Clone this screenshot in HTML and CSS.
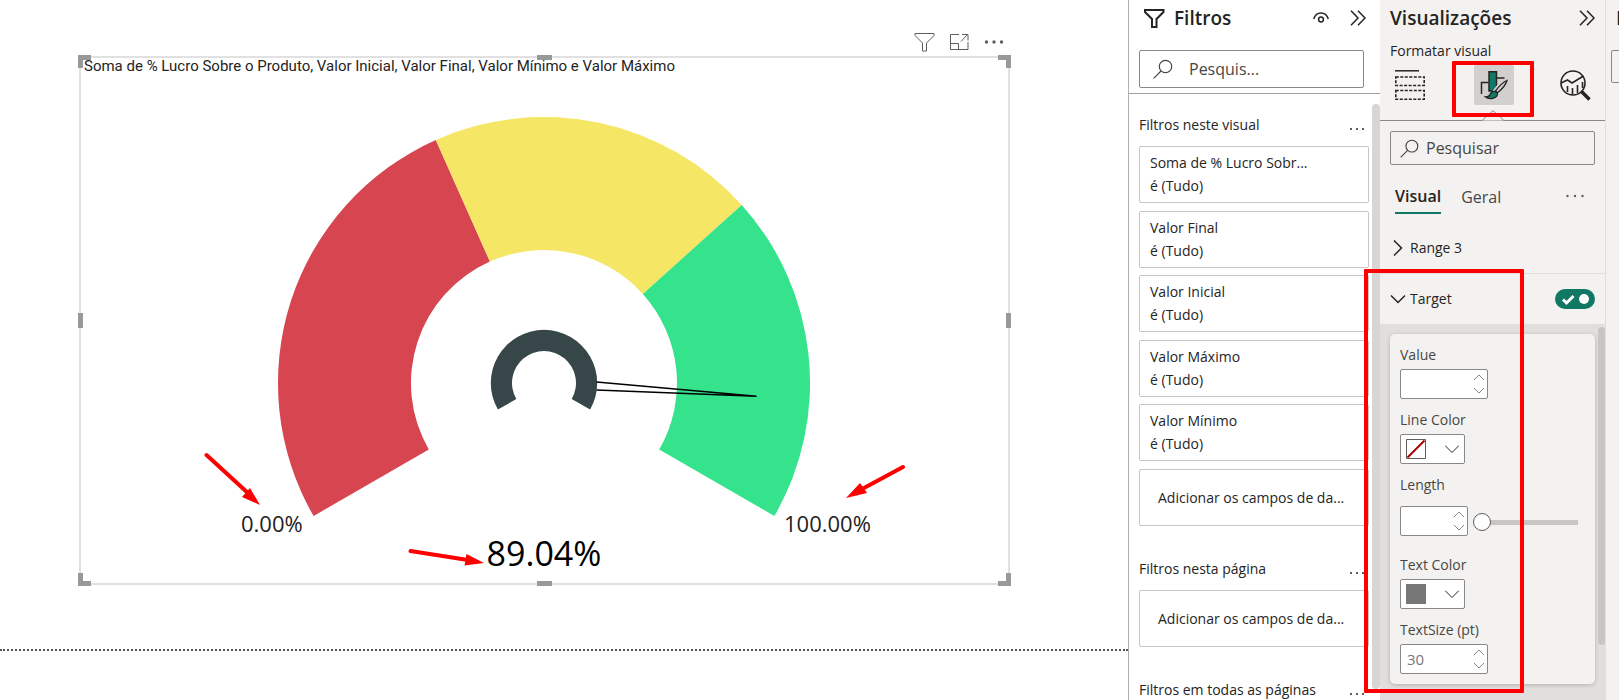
FILE: index.html
```html
<!DOCTYPE html>
<html lang="pt-BR">
<head>
<meta charset="utf-8">
<title>Medidor</title>
<link rel="stylesheet" href="styles.css">
</head>
<body>
<main class="canvas">
  <section class="visual">
    <div class="visual-tools">
      <button class="icon-btn" aria-label="Filtros"><svg width="21" height="20" viewBox="0 0 21 20"><path d="M1 1.5h19v2l-7.500 7.500v8h-4v-8l-7.500-7.500z"/></svg></button>
      <button class="icon-btn" aria-label="Foco"><svg width="19" height="16" viewBox="0 0 19 16"><path d="M9 .5H.500v15h17.500V8M.500 9.500h8v6M11 7.500l6.500-7M12 .5h6v6"/></svg></button>
      <button class="icon-btn" aria-label="Mais"><svg class="dots" width="20" height="6" viewBox="0 0 20 6"><circle cx="2.500" cy="3" r="1.700"/><circle cx="10" cy="3" r="1.700"/><circle cx="17.500" cy="3" r="1.700"/></svg></button>
    </div>
    <div class="frame">
      <h2 class="visual-title">Soma de % Lucro Sobre o Produto, Valor Inicial, Valor Final, Valor Mínimo e Valor Máximo</h2>
      <svg class="gauge" viewBox="81 76 927 507">
        <g transform="translate(544 383)">
          <path fill="#d64550" d="M-230.400 133A266 266 0 0 1-108.200-243L-54.100-121.500A133 133 0 0 0-115.200 66.500Z"/>
          <path fill="#f5e665" d="M-108.200-243A266 266 0 0 1 197.700-178L98.800-89A133 133 0 0 0-54.100-121.500Z"/>
          <path fill="#34e38b" d="M197.700-178A266 266 0 0 1 230.400 133L115.200 66.500A133 133 0 0 0 98.800-89Z"/>
          <path fill="#374649" d="M-46.100 26.600A53.200 53.200 0 1 1 46.100 26.600L27.700 16A32 32 0 1 0-27.700 16Z"/>
          <path fill="none" stroke="#000" stroke-width="1.500" d="M52.500-1L212.500 13.300L52.500 7"/>
        </g>
        <text class="limit" x="241" y="532">0.00%</text>
        <text class="limit" x="784" y="532">100.00%</text>
        <text class="reading" x="544" y="566" text-anchor="middle">89.04%</text>
        <g class="arrows">
          <path d="M206.500 455L249 494M410.500 551L468 560M903 467L863 488.500"/>
          <path class="head" d="M260 505L242 497L250 488ZM484 563L464.500 565.500L466.500 554ZM846 498L860 483L867 493Z"/>
        </g>
      </svg>
      <i class="corner tl"></i><i class="corner tr"></i><i class="corner bl"></i><i class="corner br"></i>
      <i class="grip top"></i><i class="grip bottom"></i><i class="grip left"></i><i class="grip right"></i>
    </div>
  </section>
  <hr class="page-edge">
</main>

<aside class="filters">
  <header class="filters-head">
    <div class="title-row">
      <svg width="21" height="19" viewBox="0 0 21 19"><path d="M1 1h18.500v2L12.500 10v8h-4.500v-8L1 3z"/></svg>
      <h1 class="pane-title">Filtros</h1>
      <button class="icon-btn eye" aria-label="Exibir"><svg width="16" height="12" viewBox="0 0 16 12"><path d="M.700 7C2 3 5 1 8 1s6 2 7.300 6"/><circle cx="8" cy="7.500" r="2.400"/></svg></button>
      <button class="icon-btn" aria-label="Recolher"><svg width="16" height="16" viewBox="0 0 16 16"><path d="M1 .7L8 8l-7 7.300M8 .7L15 8l-7 7.300"/></svg></button>
    </div>
    <div class="search wide">
      <svg width="20" height="20" viewBox="0 0 20 20"><circle cx="12.500" cy="7.500" r="6.200"/><path d="M8 12l-7.300 7.300"/></svg>
      <input type="text" placeholder="Pesquis..." aria-label="Pesquisar filtros">
    </div>
  </header>
  <div class="filters-body">
    <section class="group">
      <div class="group-head"><h3>Filtros neste visual</h3><button class="icon-btn" aria-label="Mais"><svg class="dots" width="14" height="3" viewBox="0 0 14 3"><path d="M0 1h2v2H0zM6 1h2v2H6zM12 1h2v2h-2z"/></svg></button></div>
      <div class="cards five">
        <div class="card"><span>Soma de % Lucro Sobr...</span><span>é (Tudo)</span></div>
        <div class="card"><span>Valor Final</span><span>é (Tudo)</span></div>
        <div class="card"><span>Valor Inicial</span><span>é (Tudo)</span></div>
        <div class="card"><span>Valor Máximo</span><span>é (Tudo)</span></div>
        <div class="card"><span>Valor Mínimo</span><span>é (Tudo)</span></div>
        <div class="card drop">Adicionar os campos de da...</div>
      </div>
    </section>
    <section class="group">
      <div class="group-head"><h3>Filtros nesta página</h3><button class="icon-btn" aria-label="Mais"><svg class="dots" width="14" height="3" viewBox="0 0 14 3"><path d="M0 1h2v2H0zM6 1h2v2H6zM12 1h2v2h-2z"/></svg></button></div>
      <div class="cards"><div class="card drop">Adicionar os campos de da...</div></div>
    </section>
    <section class="group">
      <div class="group-head"><h3>Filtros em todas as páginas</h3><button class="icon-btn" aria-label="Mais"><svg class="dots" width="14" height="3" viewBox="0 0 14 3"><path d="M0 1h2v2H0zM6 1h2v2H6zM12 1h2v2h-2z"/></svg></button></div>
    </section>
  </div>
  <i class="scrollbar"></i>
</aside>

<aside class="format">
  <header class="format-head">
    <div class="title-row">
      <h1 class="pane-title">Visualizações</h1>
      <button class="icon-btn" aria-label="Recolher"><svg width="16" height="16" viewBox="0 0 16 16"><path d="M1 .7L8 8l-7 7.300M8 .7L15 8l-7 7.300"/></svg></button>
    </div>
    <h2 class="subtitle">Formatar visual</h2>
    <div class="modes">
      <button class="mode" aria-label="Campos"><svg width="30" height="30" viewBox="0 0 30 30"><path stroke-width="1.500" d="M0 .8h24"/><path stroke-width="1.600" stroke-dasharray="3 1.500" d="M.800 7h28.400v8.500H.800zM.800 20.500h28.400v8.700H.800z"/></svg></button>
      <button class="mode active" aria-label="Formatar"><svg width="28" height="30" viewBox="0 0 28 30"><path stroke-width="1.500" d="M1.500 24V12.500h7M16.500 8h8"/><path fill="#117865" stroke-width="1.500" d="M9 1.700h7.500V21H9z"/><path fill="#d2d0ce" stroke="#d2d0ce" stroke-width="4" d="M27 10.500c-5 2-10 7-13 12l3 2c4-3 9-9 10-14z"/><path fill="#d2d0ce" stroke-width="1.300" d="M27 10.500c-4.500 2-8.500 6.500-11.500 10.500l2 1.700c3.800-3 8.300-7.700 9.500-12.200z"/><path fill="#117865" stroke-width="1.300" d="M15.500 21.500c-3.500-.5-5 1.500-5.500 3-.8 1.800-2.500 2.500-4.500 2.500 3.500 2.700 12.500 2 12-4z"/></svg></button>
      <button class="mode" aria-label="Análise"><svg width="31" height="31" viewBox="0 0 31 31"><circle cx="13" cy="13" r="12" stroke-width="1.600"/><path stroke-width="1.600" d="M1 13l6.500-3L12 13l11.500-7M7.500 16v6M12.500 18v6.500M17.500 15v8"/><path stroke-width="1.600" d="M22.500 12v6"/><path stroke-width="3.500" d="M21.500 21.500l8 8"/></svg></button>
    </div>
    <svg class="notch" width="22" height="11" viewBox="0 0 22 11"><path d="M0 10.500L11 .7L22 10.500"/></svg>
  </header>
  <div class="search">
    <svg width="19" height="19" viewBox="0 0 20 20"><circle cx="12.500" cy="7.500" r="6.200"/><path d="M8 12l-7.300 7.300"/></svg>
    <input type="text" placeholder="Pesquisar" aria-label="Pesquisar formatos">
  </div>
  <nav class="tabs">
    <button class="tab current">Visual</button>
    <button class="tab">Geral</button>
    <button class="icon-btn more" aria-label="Mais"><svg class="dots" width="18" height="4" viewBox="0 0 18 4"><circle cx="1.500" cy="2" r="1.200"/><circle cx="9" cy="2" r="1.200"/><circle cx="16.500" cy="2" r="1.200"/></svg></button>
  </nav>
  <div class="section-row">
    <button class="expander"><svg width="16" height="16" viewBox="0 0 16 16"><path d="M4 .5l7.500 7.500L4 15.500"/></svg>Range 3</button>
  </div>
  <div class="section-row ruled">
    <button class="expander"><svg width="16" height="16" viewBox="0 0 16 16"><path d="M1 4.500l7 7 7-7"/></svg>Target</button>
    <label class="toggle"><input type="checkbox" checked aria-label="Target"><svg width="40" height="20" viewBox="0 0 40 20"><path d="M8 10.500l3.500 3.500L18.500 7"/><circle cx="29" cy="10" r="5"/></svg></label>
  </div>
  <div class="settings">
    <form class="panel">
      <div class="field"><label for="value">Value</label>
        <div class="spin"><input id="value" type="number"><svg width="10" height="20" viewBox="0 0 10 20"><path d="M0 6l5-5 5 5M0 14l5 5 5-5"/></svg></div></div>
      <div class="field"><label for="line">Line Color</label>
        <button id="line" type="button" class="color"><svg width="20" height="20" viewBox="0 0 20 20"><path fill="#fff" stroke="#605e5c" d="M.500.500h19v19H.500z"/><path stroke="#a80000" stroke-width="2" d="M1.500 18.500l17-17"/></svg><svg width="14" height="8" viewBox="0 0 14 8"><path d="M0 .5l7 7 7-7"/></svg></button></div>
      <div class="field"><label for="length">Length</label>
        <div class="length"><div class="spin narrow"><input id="length" type="number"><svg width="10" height="20" viewBox="0 0 10 20"><path d="M0 6l5-5 5 5M0 14l5 5 5-5"/></svg></div><input class="slider" type="range" min="0" max="100" value="0" aria-label="Length"></div></div>
      <div class="field"><label for="text">Text Color</label>
        <button id="text" type="button" class="color"><svg width="20" height="20" viewBox="0 0 20 20"><path fill="#777" stroke="none" d="M0 0h20v20H0z"/></svg><svg width="14" height="8" viewBox="0 0 14 8"><path d="M0 .5l7 7 7-7"/></svg></button></div>
      <div class="field"><label for="size">TextSize (pt)</label>
        <div class="spin"><input id="size" type="number" value="30"><svg width="10" height="20" viewBox="0 0 10 20"><path d="M0 6l5-5 5 5M0 14l5 5 5-5"/></svg></div></div>
    </form>
    <i class="scrollbar inner"></i>
  </div>
  <i class="mark mark-mode"></i>
  <i class="mark mark-target"></i>
</aside>

<aside class="data">
  <h1 class="pane-title">D</h1>
  <div class="stub"></div>
</aside>
</body>
</html>
```
FILE: styles.css
```css
* { box-sizing: border-box; }
body {
  margin: 0;
  display: flex;
  height: 100vh;
  overflow: hidden;
  background: #fff;
  color: #252423;
  font-family: "Open Sans", "Noto Sans", sans-serif;
  font-size: 14px;
}
h1, h2, h3 { margin: 0; font-weight: 400; }
svg { display: block; flex: none; fill: none; stroke: #252423; }
button, input { font: inherit; color: inherit; }
.icon-btn { padding: 0; border: 0; background: none; line-height: 20px; }
.dots { fill: #605e5c; stroke: none; }

.canvas { flex: 1; min-width: 0; padding-top: 32px; }
.visual { margin: 0 118px 0 79px; }
.visual-tools {
  display: flex;
  justify-content: flex-end;
  align-items: center;
  gap: 15px;
  height: 24px;
  padding: 0 6px 4px 0;
}
.visual-tools svg { stroke: #605e5c; }
.visual-tools .dots { stroke: none; }
.frame { position: relative; border: 2px solid #e1e1e1; }
.visual-title {
  height: 18px;
  padding-left: 3px;
  font-family: Roboto, sans-serif;
  font-size: 15px;
  line-height: 17px;
  white-space: nowrap;
}
.gauge { width: 100%; height: auto; stroke: none; }
.gauge text { font-family: "Open Sans", "Noto Sans", sans-serif; fill: #222; }
.gauge .limit { font-size: 22px; }
.gauge .reading { font-size: 34px; fill: #000; }
.arrows { fill: none; stroke: #f00; stroke-width: 4; stroke-linecap: round; }
.arrows .head { fill: #f00; stroke: none; }
.corner { position: absolute; width: 13px; height: 13px; border: 0 solid #999; }
.tl { top: -3px; left: -3px; border-width: 5px 0 0 5px; }
.tr { top: -3px; right: -3px; border-width: 5px 5px 0 0; }
.bl { bottom: -3px; left: -3px; border-width: 0 0 5px 5px; }
.br { bottom: -3px; right: -3px; border-width: 0 5px 5px 0; }
.grip { position: absolute; background: #999; }
.grip.top, .grip.bottom { left: calc(50% - 8px); width: 15px; height: 5px; }
.grip.left, .grip.right { top: calc(50% - 8px); width: 5px; height: 15px; }
.grip.top { top: -3px; }
.grip.bottom { bottom: -3px; }
.grip.left { left: -3px; }
.grip.right { right: -3px; }
.page-edge { margin: 64px 0 0; border: 0; border-top: 2px dotted #555; }

.pane-title { flex: 1; font-size: 19px; font-weight: 600; line-height: 24px; }
.title-row { display: flex; align-items: center; height: 36px; }

.filters {
  position: relative;
  width: 252px;
  flex: none;
  border-left: 1px solid #b3b0ad;
  overflow: hidden;
}
.filters-head { height: 94px; padding: 0 14px 0 15px; border-bottom: 1px solid #a19f9d; }
.filters-head .title-row { gap: 9px; margin-bottom: 14px; }
.filters-head svg { stroke-width: 1.500; }
.filters-head .title-row > svg { stroke-width: 2; }
.filters-head .eye { margin-right: 12px; }
.search {
  display: flex;
  align-items: center;
  gap: 7px;
  height: 34px;
  padding: 0 9px;
  border: 1px solid #8a8886;
  border-radius: 2px;
}
.search svg { stroke: #484644; stroke-width: 1.200; }
.search input {
  flex: 1;
  width: 0;
  padding: 0;
  border: 0;
  background: none;
  font-size: 16px;
}
.search input::placeholder { color: #484644; opacity: 1; }
.search.wide { height: 38px; margin: 0 2px 0 -5px; padding: 0 13px; gap: 16px; }
.filters-body { padding: 20px 11px 0 10px; }
.group { margin-bottom: 32px; }
.group-head { display: flex; justify-content: space-between; align-items: center; height: 22px; margin-bottom: 10px; padding-right: 5px; }
.group-head h3 { font-size: 14px; line-height: 22px; white-space: nowrap; }
.group-head .icon-btn { padding-top: 6px; }
.cards { display: flex; flex-direction: column; justify-content: space-between; }
.cards.five { min-height: 380px; }
.card {
  display: flex;
  flex-direction: column;
  height: 57px;
  padding: 4px 10px 6px;
  border: 1px solid #c8c6c4;
  border-radius: 2px;
  line-height: 23px;
  white-space: nowrap;
}
.card.drop { justify-content: center; padding: 5px 10px 5px 18px; }
.scrollbar {
  position: absolute;
  top: 104px;
  right: 0;
  bottom: 11px;
  width: 8px;
  border-radius: 4px;
  background: #d8d6d4;
}

.format {
  position: relative;
  display: flex;
  flex-direction: column;
  width: 225px;
  flex: none;
  background: #f3f2f1;
}
.format-head { position: relative; height: 121px; padding: 0 10px; border-bottom: 1px solid #8a8886; }
.subtitle { margin-top: 5px; font-size: 14px; line-height: 20px; }
.format-head svg { stroke-width: 1.500; }
.modes { display: flex; justify-content: space-between; align-items: center; margin: 4px 4px 0 5px; }
.mode { display: flex; align-items: center; justify-content: center; height: 40px; padding: 0; border: 0; background: none; }
.mode.active { width: 40px; margin-left: 18px; margin-right: 16px; border-radius: 2px; background: #d2d0ce; }
.format-head .notch {
  position: absolute;
  bottom: -1px;
  left: calc(50% - 11px);
  fill: #f3f2f1;
  stroke: #8a8886;
  stroke-width: 1;
}
.format .search { margin: 10px 10px 0; flex: none; }
.tabs { display: flex; gap: 20px; height: 50px; padding: 15px 21px 0 15px; }
.tab { height: 34px; padding: 0; border: 0; background: none; font-size: 16px; line-height: 30px; color: #484644; }
.tab.current { border-bottom: 2px solid #117865; font-weight: 600; color: #252423; }
.more { margin-left: auto; height: 31px; }
.section-row { display: flex; align-items: center; justify-content: space-between; height: 50px; padding: 0 10px; margin-top: 8px; }
.section-row.ruled { height: 51px; margin-top: 0; border-top: 1px solid #e1dfdd; }
.expander { display: flex; align-items: center; gap: 4px; padding: 0; border: 0; background: none; line-height: 20px; }
.expander svg { stroke-width: 1.500; }
.toggle { position: relative; border-radius: 10px; background: #117865; }
.toggle input { position: absolute; inset: 0; margin: 0; opacity: 0; }
.toggle path { stroke: #fff; stroke-width: 3; }
.toggle circle { fill: #fff; stroke: none; }
.settings { position: relative; flex: 1; padding: 10px; background: #e1dfdd; }
.panel {
  display: flex;
  flex-direction: column;
  gap: 9px;
  padding: 11px 10px 10px;
  border-radius: 5px;
  background: #f3f2f1;
  box-shadow: 0 1px 4px rgba(0, 0, 0, .2);
}
.field { display: flex; flex-direction: column; align-items: flex-start; gap: 4px; color: #484644; }
.field label { line-height: 20px; }
.field + .field { padding-top: 2px; }
.spin { position: relative; width: 88px; height: 30px; }
.spin.narrow { width: 68px; flex: none; }
.spin input {
  width: 100%;
  height: 30px;
  padding: 0 6px;
  border: 1px solid #8a8886;
  border-radius: 2px;
  background: #fff;
  color: #777;
  font-size: 15px;
  appearance: textfield;
}
.spin svg { position: absolute; top: 5px; right: 4px; stroke: #8a8886; }
.color {
  display: flex;
  align-items: center;
  gap: 19px;
  width: 65px;
  height: 30px;
  padding: 0 5px;
  border: 1px solid #8a8886;
  border-radius: 2px;
  background: #fff;
}
.length { display: flex; align-items: center; gap: 5px; margin: 7px 0 8px; }
.slider { appearance: none; width: 105px; height: 18px; margin: 2px 0 0; background: linear-gradient(#c8c6c4, #c8c6c4) no-repeat 9px 7px / 100% 5px; }
.slider::-webkit-slider-thumb {
  appearance: none;
  width: 18px;
  height: 18px;
  border: 1px solid #605e5c;
  border-radius: 50%;
  background: #fff;
}
.scrollbar.inner { top: 3px; bottom: auto; height: 318px; width: 7px; background: #c8c6c4; }

/* Highlight boxes drawn over the panes */
.mark { position: absolute; border: 4px solid #f00; border-radius: 1px; pointer-events: none; }
.mark-mode { top: 61px; left: 72px; width: 82px; height: 56px; }
.mark-target { top: 269px; left: -16px; width: 160px; height: 424px; }

.data { width: 14px; flex: none; padding: 6px 0 0 5px; border-left: 1px solid #e1dfdd; background: #f3f2f1; overflow: hidden; }
.data .pane-title { padding-left: 5px; }
.stub { width: 40px; height: 33px; margin-top: 20px; border: 1px solid #8a8886; border-radius: 2px; }
```
